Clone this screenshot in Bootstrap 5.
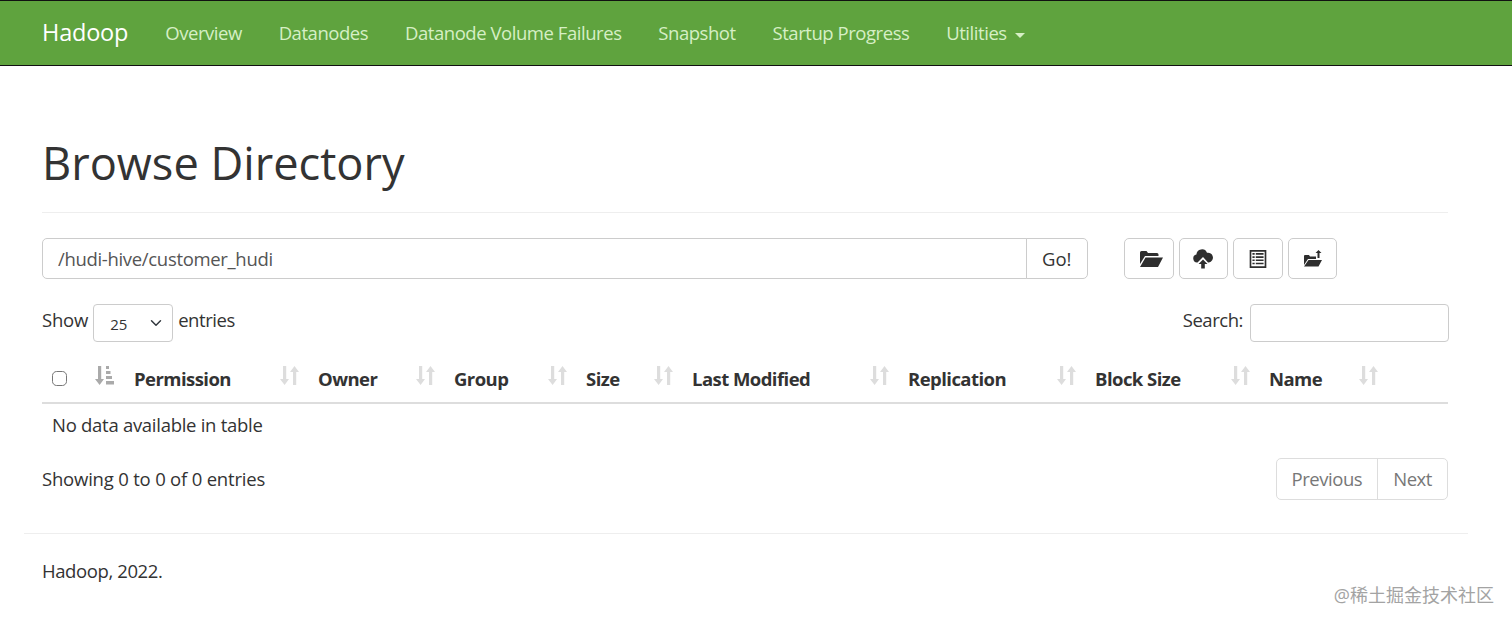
<!DOCTYPE html>
<html lang="en">
<head>
  <meta charset="UTF-8">
  <title>Browsing HDFS</title>
  <meta name="viewport" content="width=device-width, initial-scale=1">
  <link href="https://cdn.jsdelivr.net/npm/bootstrap@5.3.3/dist/css/bootstrap.min.css" rel="stylesheet">
  <style>
    body {
      font-family: "Open Sans", "Noto Sans CJK SC", sans-serif;
      font-size: 18.5px;
      color: #333;
      background: #fff;
      letter-spacing: -0.2px;
    }
    .hd-bar {
      height: 66px;
      background: #5fa33e;
      border-top: 1px solid #111;
      border-bottom: 1px solid #111;
      padding: 0 42px;
    }
    .hd-brand { color: #fff; font-size: 23.5px; text-decoration: none; margin-right: 37px; }
    .hd-link { color: #d6efc5; font-size: 18.5px; letter-spacing: -0.45px; text-decoration: none; margin-right: 36.8px; }
    .hd-caret {
      display: inline-block;
      border-top: 5px solid #d6efc5;
      border-left: 5px solid transparent;
      border-right: 5px solid transparent;
      margin-left: 8px;
      vertical-align: middle;
    }
    .hd-main { padding: 0 42px; margin: 0 22px 0 0; width: 1490px; }
    .hd-title { font-size: 45.2px; font-weight: 400; line-height: 60px; margin: 0; padding: 67px 0 17px; border-bottom: 1px solid #eee; height: 147px; letter-spacing: 0; }
    .hd-path { margin-top: 25px; }
    .hd-path-group { width: 1046px; height: 41px; }
    .hd-path-group .form-control { font-size: 18.5px; color: #555; padding: 0 15px; border-color: #ccc; height: 41px; border-radius: 5px 0 0 5px; letter-spacing: -0.32px; }
    .hd-go { font-size: 18.5px; color: #333; border: 1px solid #ccc; border-radius: 0 5px 5px 0; padding: 0 15.5px; margin-left: -1px; background: #fff; }
    .hd-tools { margin-left: 36px; gap: 5px; }
    .hd-tool { width: 49.6px; height: 41px; padding: 0; border: 1px solid #ccc; border-radius: 5px; background: #fff; color: #333; }
    .hd-length { margin-top: 25px; height: 38px; }
    .hd-label { padding-bottom: 6px; }
    .hd-tight { letter-spacing: -0.45px; }
    .hd-select { width: 80px; height: 38px; font-size: 15px; color: #333; padding: 2px 16px 0 16px; margin: 0 5px; border-color: #ccc; border-radius: 4px; background-position: right 8px center; }
    .hd-search { width: 199px; height: 38px; border-color: #ccc; border-radius: 4px; margin-left: 6px; transform: translateX(1px); }
    .hd-table { width: 1406px; table-layout: fixed; margin: 13px 0 0; border-collapse: collapse; }
    .hd-table th { font-weight: 700; font-size: 18.5px; letter-spacing: -0.55px; color: #333; padding: 11px 9px 10px; height: 44px; position: relative; border-bottom: 2px solid #ddd; line-height: 26px; white-space: nowrap; }
    .hd-table td { padding: 7px 10px 11px; height: 46px; line-height: 26px; border: 0; color: #333; letter-spacing: -0.28px; }
    .hd-sort { position: absolute; top: 10px; right: 9px; width: 22px; height: 22px; color: #ddd; }
    .hd-check { width: 15px; height: 15px; margin: -2px 0 0 1px; display: block; border-color: #777; border-radius: 3px; }
    .hd-info { margin-top: 9px; height: 42px; }
    .hd-pager { border: 1px solid #ddd; border-radius: 5px; height: 42px; letter-spacing: -0.45px; }
    .hd-pager a { color: #777; text-decoration: none; padding: 0 15px; line-height: 40px; }
    .hd-pager a + a { border-left: 1px solid #ddd; }
    .hd-foot { width: 1444px; margin: 33px 0 0 24px; border-top: 1px solid #eee; padding: 24px 18px 0; line-height: 26px; letter-spacing: -0.4px; }
    .hd-mark { position: absolute; right: 18px; top: 582px; color: #a3a3a3; font-size: 18px; letter-spacing: 0; line-height: 26px; }
  </style>
</head>
<body>
  <svg class="d-none">
    <symbol id="sort" viewBox="0 0 22 22"><path fill="currentColor" d="M5 1h3.200v13H11l-4.400 6L2 14h3zM12 7h3v13h3.200V7H21L16.500 1 12 7z"/></symbol>
  </svg>

  <nav class="hd-bar d-flex align-items-center">
    <a class="hd-brand" href="#">Hadoop</a>
    <a class="hd-link" href="#">Overview</a>
    <a class="hd-link" href="#">Datanodes</a>
    <a class="hd-link" href="#">Datanode Volume Failures</a>
    <a class="hd-link" href="#">Snapshot</a>
    <a class="hd-link" href="#">Startup Progress</a>
    <a class="hd-link" href="#">Utilities<span class="hd-caret"></span></a>
  </nav>

  <div class="hd-main">
    <h1 class="hd-title">Browse Directory</h1>

    <div class="hd-path d-flex">
      <div class="hd-path-group input-group flex-nowrap">
        <input class="form-control" type="text" value="/hudi-hive/customer_hudi">
        <button class="hd-go" type="button">Go!</button>
      </div>
      <div class="hd-tools d-flex">
        <button class="hd-tool d-flex align-items-center justify-content-center ps-1" type="button" title="Open">
          <svg width="24" height="18" viewBox="0 0 24 18"><path fill="#2e2e2e" d="M1 2.500Q1 1 2.500 1h5l1.500 2h9q1.500 0 1.500 1.500V6H6L1 14zM6.500 7.500H24L19 17H1z"/></svg>
        </button>
        <button class="hd-tool d-flex align-items-center justify-content-center" type="button" title="Upload">
          <svg width="20" height="21" viewBox="0 0 20 21"><path fill="#2e2e2e" d="M4.500 14.500H4a4 4 0 0 1-.6-7.900A5.500 5.500 0 0 1 14 4.800a4.900 4.900 0 0 1 2 9.700h-1l-5-5.500zM10 11.500 14.500 16H11.800v4.500H8.200V16H5.500z"/></svg>
        </button>
        <button class="hd-tool d-flex align-items-center justify-content-center" type="button" title="List">
          <svg width="20" height="20" viewBox="0 0 18 18"><path fill="#2e2e2e" fill-rule="evenodd" d="M1.500 1h15v16h-15zM3 2.500v13h12v-13zM4 3.600h2v1.500H4zM7 3.600h7v1.500H7zM4 6.500h2v1.500H4zM7 6.500h7v1.500H7zM4 9.400h2v1.500H4zM7 9.400h7v1.500H7zM4 12.300h2v1.500H4zM7 12.300h7v1.500H7z"/></svg>
        </button>
        <button class="hd-tool d-flex align-items-center justify-content-center" type="button" title="New folder">
          <svg width="20" height="17" viewBox="0 0 20 17"><path fill="#2e2e2e" d="M1 6q0-1 1-1h4l1 1.500h6V9H5l-4 6zM5.500 10H19l-3.500 6.500H1zM15.500 0l3 3h-2v5h-2V3h-2z"/></svg>
        </button>
      </div>
    </div>

    <div class="hd-length d-flex align-items-center justify-content-between">
      <div class="d-flex align-items-center"><span class="hd-label">Show</span>
        <select class="hd-select form-select"><option>25</option></select>
        <span class="hd-label hd-tight">entries</span></div>
      <div class="d-flex align-items-center"><span class="hd-label hd-tight">Search:</span><input class="hd-search form-control" type="text"></div>
    </div>

    <table class="hd-table">
      <colgroup>
        <col style="width:83px"><col style="width:184px"><col style="width:136px"><col style="width:132px"><col style="width:106px"><col style="width:216px"><col style="width:187px"><col style="width:174px"><col style="width:128px"><col style="width:60px">
      </colgroup>
      <thead>
        <tr>
          <th><input class="hd-check form-check-input" type="checkbox">
            <svg class="hd-sort" viewBox="0 0 22 22"><path fill="#aaa" d="M4 1h3.200v13H10l-4.400 6L1 14h3zM12 1h3v3h-3zM12 6h4.500v3H12zM12 11h6v3h-6zM12 16h8v3.500h-8z"/></svg></th>
          <th>Permission<svg class="hd-sort"><use href="#sort"/></svg></th>
          <th>Owner<svg class="hd-sort"><use href="#sort"/></svg></th>
          <th>Group<svg class="hd-sort"><use href="#sort"/></svg></th>
          <th>Size<svg class="hd-sort"><use href="#sort"/></svg></th>
          <th>Last Modified<svg class="hd-sort"><use href="#sort"/></svg></th>
          <th>Replication<svg class="hd-sort"><use href="#sort"/></svg></th>
          <th>Block Size<svg class="hd-sort"><use href="#sort"/></svg></th>
          <th>Name<svg class="hd-sort"><use href="#sort"/></svg></th>
          <th></th>
        </tr>
      </thead>
      <tbody>
        <tr><td colspan="10">No data available in table</td></tr>
      </tbody>
    </table>

    <div class="hd-info d-flex align-items-center justify-content-between">
      <div>Showing 0 to 0 of 0 entries</div>
      <div class="hd-pager d-flex"><a href="#">Previous</a><a href="#">Next</a></div>
    </div>
  </div>

  <footer class="hd-foot">Hadoop, 2022.</footer>
  <div class="hd-mark">@稀土掘金技术社区</div>

  <script src="https://cdn.jsdelivr.net/npm/bootstrap@5.3.3/dist/js/bootstrap.bundle.min.js"></script>
</body>
</html>
